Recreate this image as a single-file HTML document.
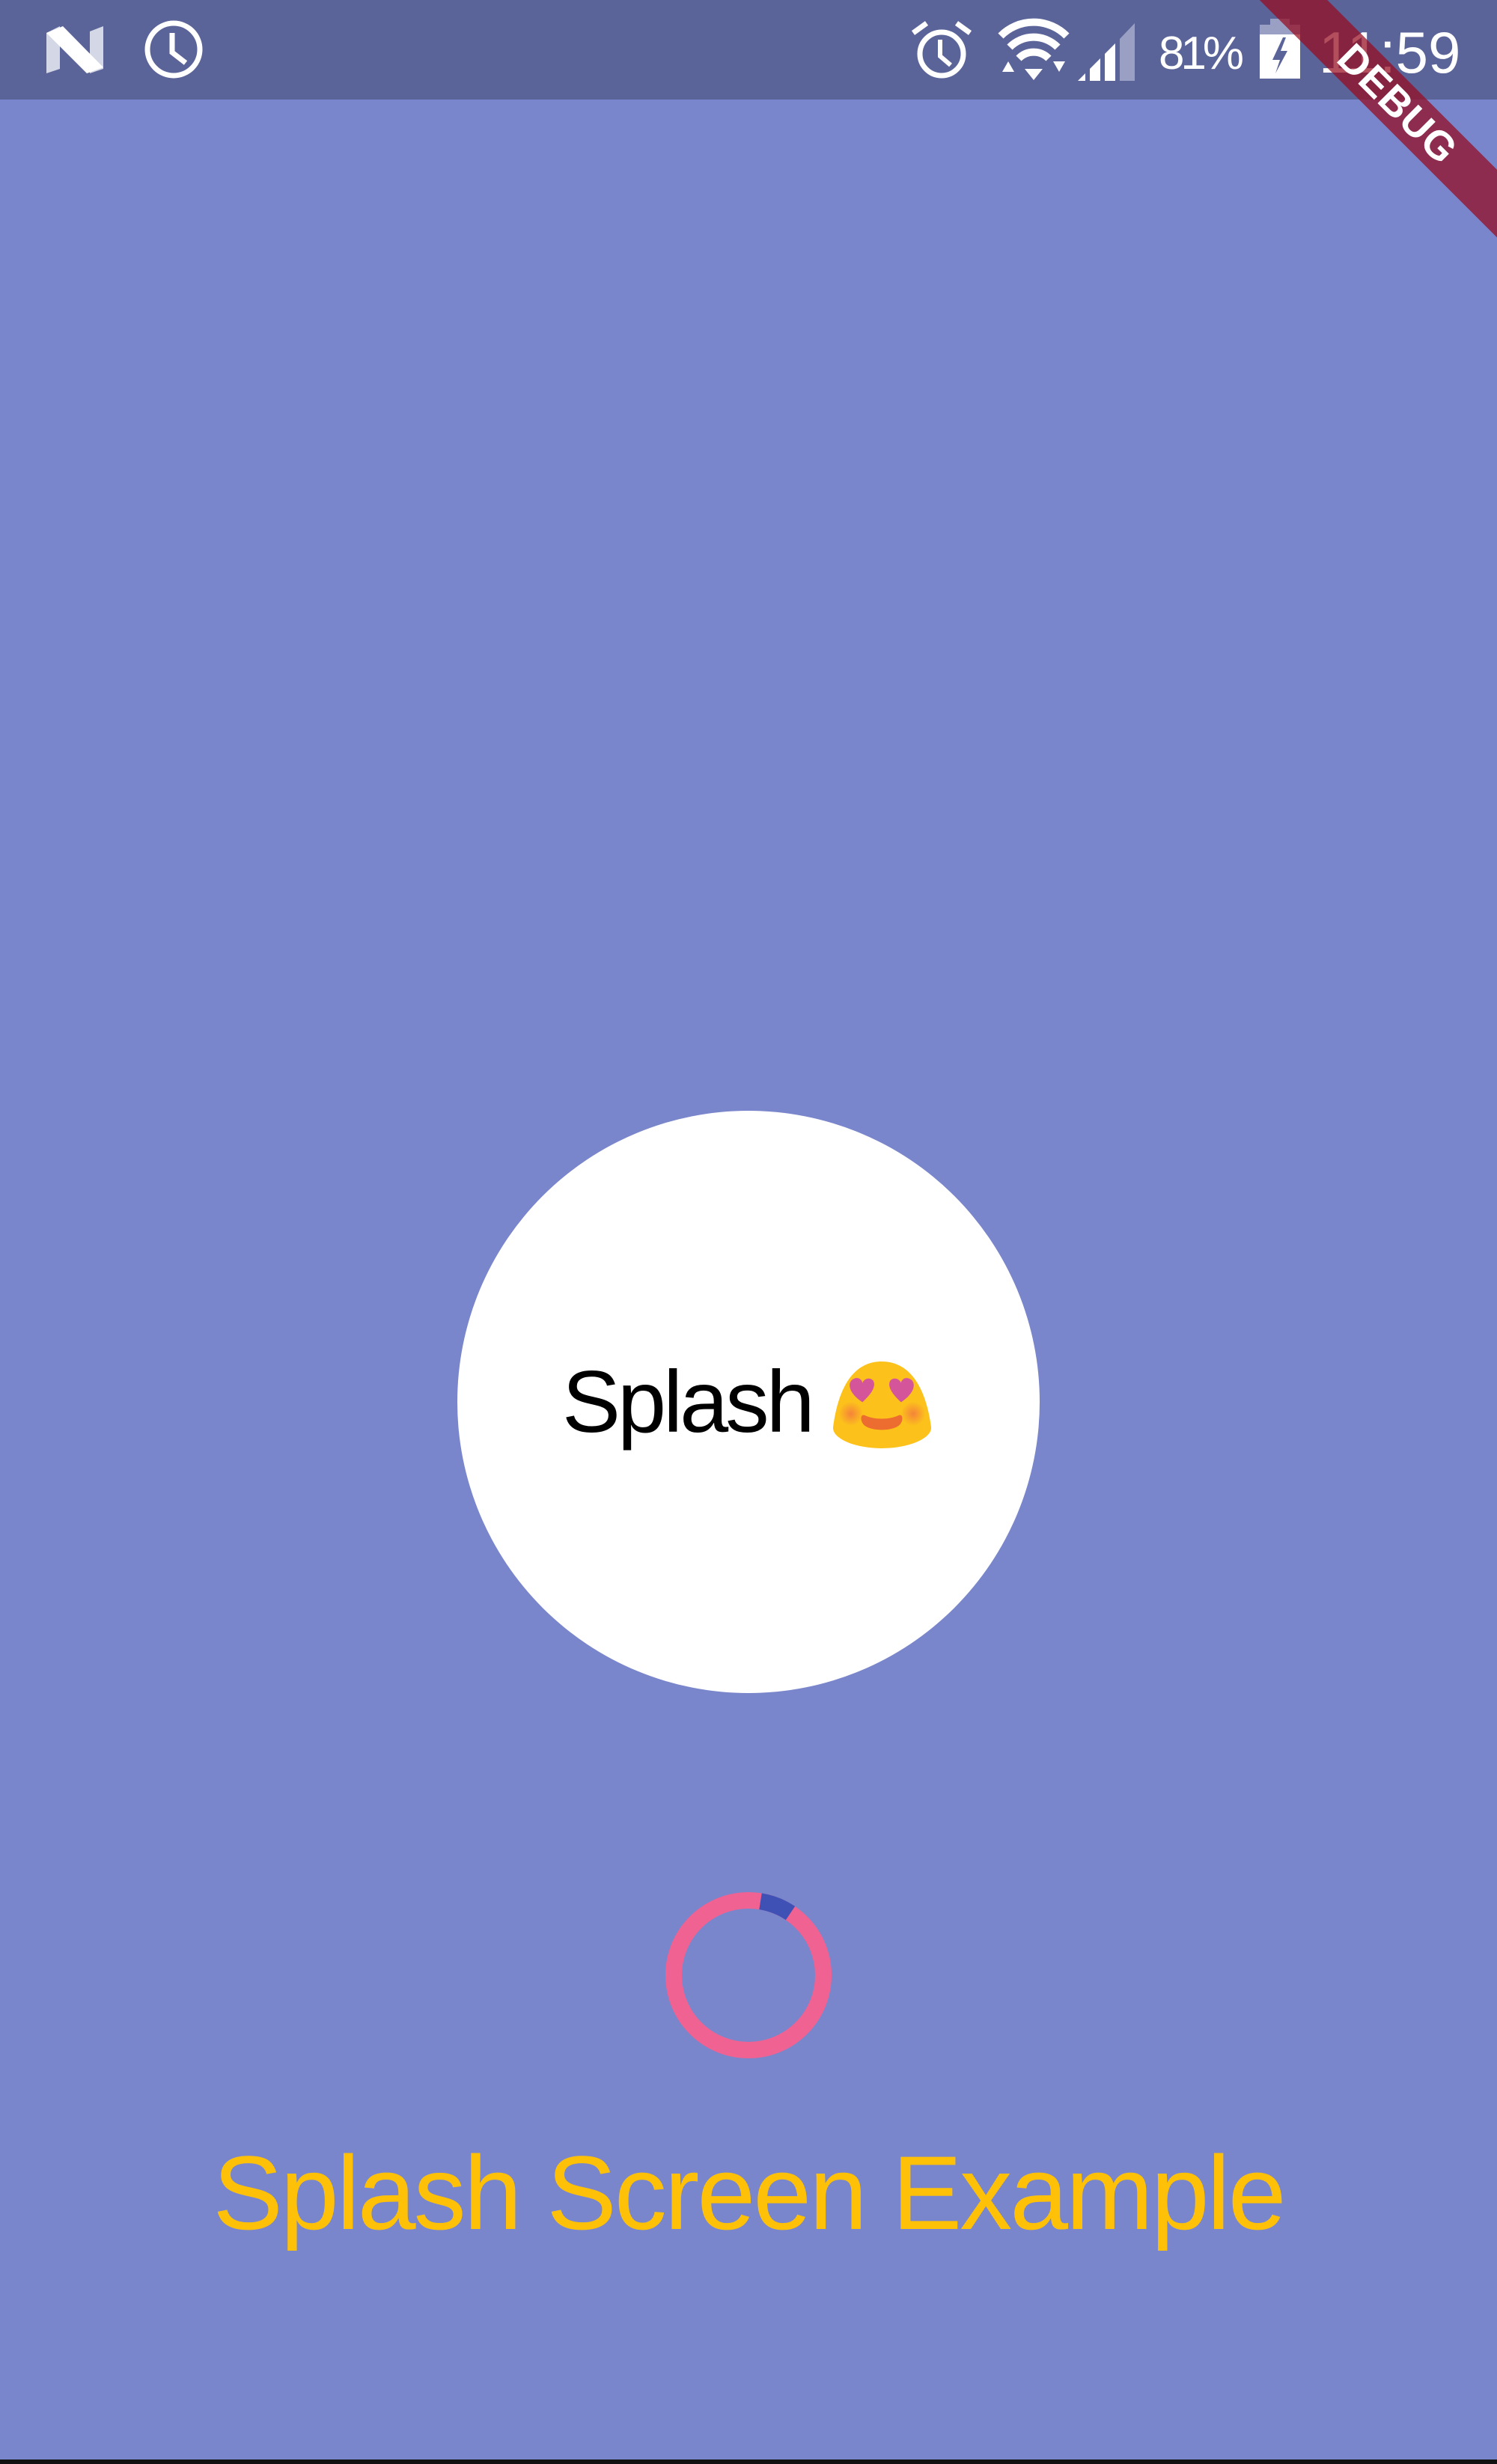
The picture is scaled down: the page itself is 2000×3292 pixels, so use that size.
<!DOCTYPE html>
<html><head><meta charset="utf-8"><style>
html,body{margin:0;padding:0}
body{width:2000px;height:3292px;background:#7986cb;position:relative;overflow:hidden;font-family:"Liberation Sans",sans-serif}
.abs{position:absolute}
</style></head><body>
<div class="abs" style="left:0;top:0;width:2000px;height:133px;background:#5b6499"></div>
<svg class="abs" style="left:0;top:0" width="2000" height="133" viewBox="0 0 2000 133">
  <polygon points="62,44 80,35 80,92 62,98" fill="#d4d7e6"/>
  <polygon points="120,42 138,35 138,92 120,98" fill="#d4d7e6"/>
  <polygon points="62,44 84,35 138,90 116,98" fill="#ffffff"/>
  <circle cx="232" cy="66" r="35" fill="none" stroke="#fff" stroke-width="7"/>
  <path d="M230 44 V70 L248 84" fill="none" stroke="#fff" stroke-width="7"/>
  <circle cx="1258" cy="72" r="29" fill="none" stroke="#fff" stroke-width="7"/>
  <path d="M1256 53 V75 L1270 87" fill="none" stroke="#fff" stroke-width="6"/>
  <path d="M1220 44 L1238 31" stroke="#fff" stroke-width="7"/>
  <path d="M1296 44 L1278 31" stroke="#fff" stroke-width="7"/>
  <path d="M1337 48 A62 62 0 0 1 1425 48" fill="none" stroke="#fff" stroke-width="10"/>
  <path d="M1349 63 A45 45 0 0 1 1413 63" fill="none" stroke="#fff" stroke-width="10"/>
  <path d="M1361 78 A28 28 0 0 1 1401 78" fill="none" stroke="#fff" stroke-width="10"/>
  <polygon points="1369,92 1393,92 1381,107" fill="#fff"/>
  <polygon points="1339,96 1347,82 1355,96" fill="#fff"/>
  <polygon points="1407,82 1423,82 1415,96" fill="#fff"/>
  <polygon points="1440,108 1450,98 1450,108" fill="#fff"/>
  <polygon points="1456,108 1456,92 1470,78 1470,108" fill="#fff"/>
  <polygon points="1476,108 1476,72 1490,58 1490,108" fill="#fff"/>
  <polygon points="1496,108 1496,52 1516,31 1516,108" fill="#9aa0c4"/>
  <rect x="1697" y="25" width="26" height="10" fill="#9aa0c4"/>
  <rect x="1683" y="33" width="54" height="14" fill="#9aa0c4"/>
  <rect x="1683" y="46" width="54" height="59" fill="#fff"/>
  <polygon points="1714,50 1700,80 1710,80 1704,98 1720,68 1711,68 1718,50" fill="#5b6499"/>
  <text x="1548" y="92" font-family="Liberation Sans" font-size="62" fill="#fff" textLength="114">81%</text>
  <text x="1762" y="97" font-family="Liberation Sans" font-size="78" fill="#fff">11:59</text>
</svg>
<div class="abs" style="left:1567px;top:107px;width:600px;height:64px;background:rgba(150,10,30,0.72);transform:rotate(45deg);transform-origin:300px 32px;color:#fff;font-weight:bold;font-size:54px;line-height:64px;text-align:center;letter-spacing:1px">DEBUG</div>
<div class="abs" style="left:611px;top:1484px;width:778px;height:778px;border-radius:50%;background:#fff"></div>
<div class="abs" style="left:751px;top:1808px;font-size:117px;line-height:130px;color:#000;letter-spacing:-4px;white-space:nowrap">Splash</div>
<svg class="abs" style="left:1111px;top:1819px" width="135" height="116" viewBox="0 0 131 113" preserveAspectRatio="none">
  <defs><radialGradient id="ch"><stop offset="0" stop-color="#f5843a"/><stop offset="1" stop-color="#f5843a" stop-opacity="0"/></radialGradient></defs>
  <path d="M65 0 C25 0 8 40 2 85 C0 100 30 113 65 113 C100 113 131 100 129 85 C123 40 105 0 65 0Z" fill="#fcc21b"/>
  <circle cx="25" cy="68" r="16" fill="url(#ch)"/>
  <circle cx="106" cy="68" r="16" fill="url(#ch)"/>
  <path d="M40 53 C20 40 20 25 30 22 C36 20 40 25 40 28 C42 22 50 20 54 25 C58 32 52 42 40 53Z" fill="#d5559b"/>
  <path d="M90 53 C78 42 72 32 76 25 C80 20 88 22 90 28 C90 25 94 20 100 22 C110 25 110 40 90 53Z" fill="#d5559b"/>
  <path d="M43 70 C55 76 75 76 87 70 C92 68 93 75 90 80 C84 92 46 92 40 80 C37 75 38 68 43 70Z" fill="#ed6c30"/>
</svg>
<svg class="abs" style="left:880px;top:2519px" width="240" height="240" viewBox="0 0 240 240">
  <circle cx="120" cy="120" r="100" fill="none" stroke="#f06292" stroke-width="22"/>
  <path d="M136 21.3 A100 100 0 0 1 176 37" fill="none" stroke="#3f51b5" stroke-width="22"/>
</svg>
<div class="abs" style="left:0;top:2850px;width:2000px;text-align:center;font-size:140px;line-height:160px;color:#ffc107;letter-spacing:-3px;white-space:nowrap">Splash Screen Example</div>
<div class="abs" style="left:0;top:3286px;width:2000px;height:6px;background:#111"></div>
</body></html>
